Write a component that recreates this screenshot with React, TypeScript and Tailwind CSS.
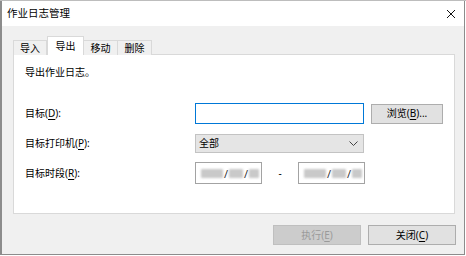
const font = "font-['Noto_Sans','Noto_Sans_CJK_SC',sans-serif]";

const Blur = ({ w }: { w: number }) => (
  <span className="inline-block h-[9px] bg-[#c9c9c9] blur-[1.2px] rounded-[1px]" style={{ width: w }} />
);

const DateBox = () => (
  <div className="w-[67px] h-[22px] border border-[#a3a3a3] bg-white flex items-center pl-[5px] gap-[1px] text-[11px] text-[#333]">
    <Blur w={22} />
    <span className="leading-none">/</span>
    <Blur w={14} />
    <span className="leading-none">/</span>
    <Blur w={10} />
  </div>
);

const Label = ({ text, k }: { text: string; k: string }) => (
  <span className="w-[170px] shrink-0">
    {text}(<span className="underline underline-offset-2">{k}</span>):
  </span>
);

export default function App() {
  return (
    <div className={`w-[466px] h-[256px] bg-white overflow-hidden text-[10px] text-black ${font}`}>
      <div className="h-px bg-[#bdbdbd]" />
      <div className="w-[465px] h-[254px] border-l-2 border-r border-b border-[#8c8c8c] flex flex-col">
        <div className="h-[25px] bg-white flex items-center justify-between pl-[5px] pr-[7px]">
          <span className="text-[10.5px]">作业日志管理</span>
          <svg width="10" height="10" viewBox="0 0 10 10" className="mr-[1px]">
            <path d="M1 1 L9 9 M9 1 L1 9" stroke="#111" strokeWidth="1" />
          </svg>
        </div>
        <div className="flex-1 bg-[#f0f0f0] pl-[11px] pr-[8px] flex flex-col">
          <div className="flex items-end h-[29px] mt-[0px] -mb-px relative z-10">
            <div className="w-[34px] h-[15px] border border-[#d9d9d9] border-b-0 bg-[#f0f0f0] flex items-center justify-center">导入</div>
            <div className="w-[37px] h-[19px] border border-[#d9d9d9] border-b-0 bg-white flex items-start pt-[2px] justify-center">导出</div>
            <div className="w-[34px] h-[15px] border border-[#d9d9d9] border-b-0 border-l-0 bg-[#f0f0f0] flex items-center justify-center">移动</div>
            <div className="w-[34px] h-[15px] border border-[#d9d9d9] border-b-0 border-l-0 bg-[#f0f0f0] flex items-center justify-center">删除</div>
          </div>
          <div className="w-[442px] h-[160px] border border-[#d9d9d9] bg-white pl-[11px] pt-[10px]">
            <div className="leading-[14px]">导出作业日志。</div>
            <div className="flex items-center mt-[24px]">
              <Label text="目标" k="D" />
              <div className="w-[169px] h-[21px] border border-[#0078d7] bg-white" />
              <button className="ml-[7px] w-[72px] h-[20px] border border-[#adadad] bg-[#e1e1e1] flex items-center justify-center">
                浏览(<span className="underline underline-offset-2">B</span>)...
              </button>
            </div>
            <div className="flex items-center mt-[10px]">
              <Label text="目标打印机" k="P" />
              <div className="w-[169px] h-[19px] border border-[#c3c3c3] bg-[#e5e5e5] flex items-center justify-between pl-[3px] pr-[5px]">
                <span>全部</span>
                <svg width="9" height="6" viewBox="0 0 9 6">
                  <path d="M0.5 0.5 L4.5 4.5 L8.5 0.5" stroke="#444" strokeWidth="1" fill="none" />
                </svg>
              </div>
            </div>
            <div className="flex items-center mt-[9px]">
              <Label text="目标时段" k="R" />
              <DateBox />
              <span className="w-[36px] text-center">-</span>
              <DateBox />
            </div>
          </div>
          <div className="flex justify-end gap-[7px] mt-[11px]">
            <button className="w-[88px] h-[20px] border border-[#bfbfbf] bg-[#cccccc] text-[#9a9a9a] flex items-center justify-center">
              执行(<span className="underline underline-offset-2">E</span>)
            </button>
            <button className="w-[88px] h-[20px] border border-[#adadad] bg-[#e1e1e1] flex items-center justify-center">
              关闭(<span className="underline underline-offset-2">C</span>)
            </button>
          </div>
        </div>
      </div>
    </div>
  );
}
